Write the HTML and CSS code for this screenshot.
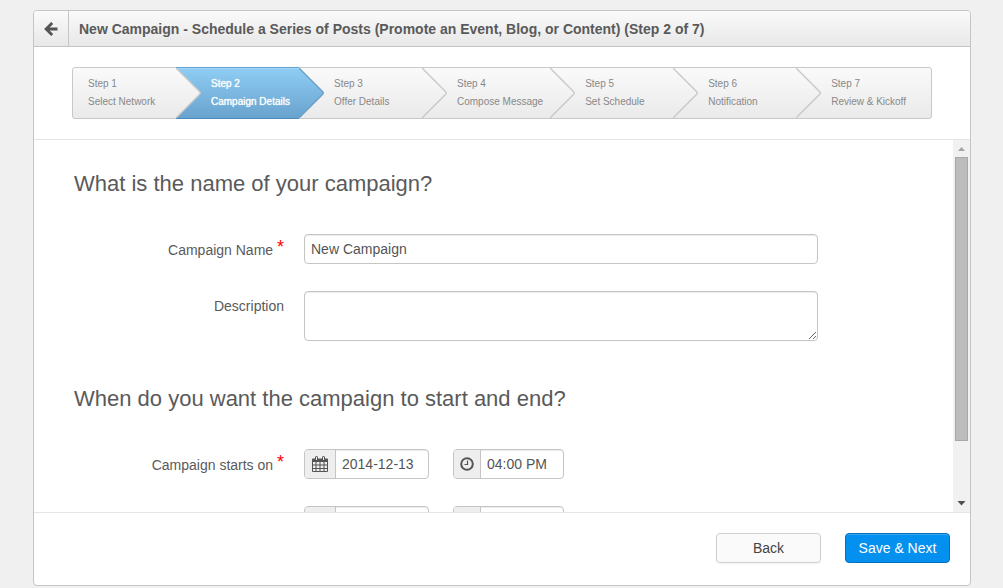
FILE: index.html
```html
<!DOCTYPE html>
<html lang="en">
<head>
  <meta charset="UTF-8" />
  <meta name="viewport" content="width=device-width, initial-scale=1.0" />
  <title>New Campaign</title>
  <link rel="stylesheet" href="styles.css">
</head>
<body>
  <form class="panel">
    <!-- Title bar -->
    <header class="panel-header">
      <button type="button" class="back-arrow" aria-label="Go back">
        <svg width="14" height="14" viewBox="0 0 14 14" fill="none" stroke="#555" stroke-width="2.8"><path d="M8.200 .9 2.100 7l6.100 6.100M2.500 7H13.500"/></svg>
      </button>
      <h1>New Campaign - Schedule a Series of Posts (Promote an Event, Blog, or Content) (Step 2 of 7)</h1>
    </header>

    <!-- Wizard steps -->
    <nav class="wizard">
      <svg class="defs" width="0" height="0">
        <defs>
          <linearGradient id="grey" x1="0" y1="0" x2="0" y2="1">
            <stop offset="0" stop-color="#fafafa"/><stop offset="1" stop-color="#eaeaea"/>
          </linearGradient>
          <linearGradient id="blue" x1="0" y1="0" x2="0" y2="1">
            <stop offset="0" stop-color="#8fcdf5"/><stop offset="1" stop-color="#68a3cd"/>
          </linearGradient>
        </defs>
      </svg>
      <ol class="steps">
        <li>Step 1<br>Select Network
          <svg class="arrow" viewBox="0 0 26 50"><path d="M0 0 23.500 23.500Q25 25 23.500 26.500L0 50"/></svg></li>
        <li class="active">Step 2<br>Campaign Details
          <svg class="arrow" viewBox="0 0 26 50"><path d="M0 0 23.500 23.500Q25 25 23.500 26.500L0 50"/></svg></li>
        <li>Step 3<br>Offer Details
          <svg class="arrow" viewBox="0 0 26 50"><path d="M0 0 23.500 23.500Q25 25 23.500 26.500L0 50"/></svg></li>
        <li>Step 4<br>Compose Message
          <svg class="arrow" viewBox="0 0 26 50"><path d="M0 0 23.500 23.500Q25 25 23.500 26.500L0 50"/></svg></li>
        <li>Step 5<br>Set Schedule
          <svg class="arrow" viewBox="0 0 26 50"><path d="M0 0 23.500 23.500Q25 25 23.500 26.500L0 50"/></svg></li>
        <li>Step 6<br>Notification
          <svg class="arrow" viewBox="0 0 26 50"><path d="M0 0 23.500 23.500Q25 25 23.500 26.500L0 50"/></svg></li>
        <li>Step 7<br>Review &amp; Kickoff</li>
      </ol>
    </nav>

    <!-- Form -->
    <div class="panel-body">
      <div class="content">
        <h2>What is the name of your campaign?</h2>
        <div class="row">
          <label for="name">Campaign Name <span class="required">*</span></label>
          <input type="text" id="name" class="field" value="New Campaign">
        </div>
        <div class="row">
          <label for="description">Description</label>
          <textarea id="description" class="field"></textarea>
        </div>

        <h2>When do you want the campaign to start and end?</h2>
        <div class="row">
          <label for="start-date">Campaign starts on <span class="required">*</span></label>
          <div class="when">
            <div class="group date">
              <span class="addon">
                <svg width="16" height="16" viewBox="0 0 16 16"><path fill="#555" fill-rule="evenodd" d="M1 2.500h2V1.500a1.500 1.500 0 0 1 3 0v1h4V1.500a1.500 1.500 0 0 1 3 0v1h2a1 1 0 0 1 1 1V15a1 1 0 0 1-1 1H1a1 1 0 0 1-1-1V3.500a1 1 0 0 1 1-1zM1 6v2.500h2.500V6zM4.500 6v2.500h3V6zM8.500 6v2.500h3V6zM12.500 6v2.500H15V6zM1 9.500V12h2.500V9.500zM4.500 9.500V12h3V9.500zM8.500 9.500V12h3V9.500zM12.500 9.500V12H15V9.500zM1 13v2h2.500v-2zM4.500 13v2h3v-2zM8.500 13v2h3v-2zM12.500 13v2H15v-2z"/><path stroke="#eee" d="M4.500 1v3M11.500 1v3"/></svg>
              </span>
              <input type="text" id="start-date" value="2014-12-13">
            </div>
            <div class="group time">
              <span class="addon">
                <svg width="14" height="14" viewBox="0 0 14 14" fill="none" stroke="#555"><circle cx="7" cy="7" r="5.800" stroke-width="2"/><path stroke-width="1.200" d="M7.500 3.500v4H4.500"/></svg>
              </span>
              <input type="text" aria-label="Start time" value="04:00 PM">
            </div>
          </div>
        </div>
        <div class="row">
          <span></span>
          <div class="when">
            <div class="group date"><span class="addon"></span><input type="text" aria-label="End date"></div>
            <div class="group time"><span class="addon"></span><input type="text" aria-label="End time"></div>
          </div>
        </div>
      </div>
      <div class="scrollbar">
        <svg width="17" height="17" viewBox="0 0 17 17"><path fill="#a3a3a3" d="M5 11 8.500 7 12 11z"/></svg>
        <div class="track"><div class="thumb"></div></div>
        <svg width="17" height="17" viewBox="0 0 17 17"><path fill="#505050" d="M4.500 6h8l-4 4.500z"/></svg>
      </div>
    </div>

    <footer class="panel-footer">
      <button type="button" class="btn">Back</button>
      <button type="button" class="btn primary">Save &amp; Next</button>
    </footer>
  </form>
</body>
</html>
```

FILE: styles.css
```css
* {
  box-sizing: border-box;
}
body {
  margin: 0;
  padding: 10px 32px 2px 33px;
  height: 100vh;
  background: #f0f0f0;
  color: #5a5a5a;
  font-family: "Liberation Sans", Arial, sans-serif;
  font-size: 14px;
  line-height: 20px;
}
input, textarea, button {
  font: inherit;
  color: #555;
}

.panel {
  display: flex;
  flex-direction: column;
  height: 100%;
  background: #fff;
  border: 1px solid #c5c5c5;
  border-radius: 4px;
  overflow: hidden;
}
.panel-header {
  display: flex;
  align-items: stretch;
  flex: none;
  height: 36px;
  background: linear-gradient(#fafafa, #e8e8e8);
  border-bottom: 1px solid #c5c5c5;
}
.back-arrow {
  display: flex;
  align-items: center;
  justify-content: center;
  width: 35px;
  padding: 0;
  background: none;
  border: 0;
  border-right: 1px solid #c5c5c5;
}
h1 {
  margin: 0;
  padding-left: 10px;
  font-size: 14px;
  line-height: 36px;
  white-space: nowrap;
}

/* wizard */
.wizard {
  flex: none;
  padding: 20px 38px;
  border-bottom: 1px solid #e5e5e5;
}
.defs {
  position: absolute;
}
.steps {
  display: flex;
  margin: 0;
  padding: 0;
  list-style: none;
  background: linear-gradient(#fafafa, #eaeaea);
  border: 1px solid #c8c8c8;
  border-radius: 3px;
  color: #888;
  font-size: 10px;
  line-height: 18px;
}
.steps li {
  position: relative;
  min-width: 123px;
  padding: 7px 7px 7px 35px;
  white-space: nowrap;
}
.steps li:first-child {
  min-width: 103px;
  padding-left: 15px;
}
.steps li:last-child {
  flex: 1;
}
.steps .active {
  margin: -1px 0;
  background: linear-gradient(#8fcdf5, #68a3cd);
  border-top: 1px solid #63a3cf;
  border-bottom: 1px solid #4c8bbb;
  box-shadow: inset 0 1px #a3d7f7;
  color: #fff;
  text-shadow: 0 0 1px #fff;
}
.arrow {
  position: absolute;
  z-index: 1;
  top: 0;
  left: 100%;
  width: 26px;
  height: 50px;
  fill: url(#grey);
  stroke: #c8c8c8;
  stroke-width: 1.4;
}
.active .arrow {
  fill: url(#blue);
  stroke: #6a9fc6;
}

/* form */
.panel-body {
  display: flex;
  flex: 1;
  min-height: 0;
}
.content {
  flex: 1;
  padding: 29px 40px 0;
  overflow: hidden;
}
h2 {
  margin: 0 0 35px;
  font-size: 22px;
  font-weight: normal;
  line-height: 30px;
}
.row + h2 {
  margin-top: 43px;
}
.row {
  display: grid;
  grid-template-columns: 210px minmax(0, 514px);
  gap: 20px;
}
.row + .row {
  margin-top: 26px;
}
.row label {
  line-height: 30px;
  text-align: right;
}
.required {
  color: #f00;
  font-size: 18px;
  line-height: 26px;
  vertical-align: 2px;
}
.field, .group {
  height: 30px;
  background: #fff;
  border: 1px solid #c5c5c5;
  border-radius: 4px;
  box-shadow: inset 0 1px 1px rgba(0, 0, 0, 0.08);
}
.field {
  width: 100%;
  padding: 4px 6px;
}
textarea.field {
  display: block;
  height: 50px;
  resize: both;
}
.when {
  display: flex;
  align-items: flex-start;
  gap: 24px;
}
.group {
  display: flex;
  overflow: hidden;
}
.date {
  width: 125px;
}
.time {
  width: 111px;
}
.addon {
  display: flex;
  align-items: center;
  justify-content: center;
  flex: none;
  width: 31px;
  background: #eee;
  border-right: 1px solid #c5c5c5;
}
.time .addon {
  width: 27px;
}
.group input {
  flex: 1;
  min-width: 0;
  padding: 0 6px;
  background: none;
  border: 0;
}

.scrollbar {
  display: flex;
  flex-direction: column;
  flex: none;
  width: 17px;
  background: #f1f1f1;
}
.scrollbar svg {
  flex: none;
}
.track {
  flex: 1;
  padding: 0 2px;
}
.thumb {
  height: 84%;
  background: #bcbcbc;
  border: 1px solid #a8a8a8;
}

.panel-footer {
  display: flex;
  justify-content: flex-end;
  gap: 24px;
  flex: none;
  padding: 20px 20px 22px;
  border-top: 1px solid #e5e5e5;
}
.btn {
  width: 105px;
  height: 30px;
  padding: 0;
  background: #fafafa;
  border: 1px solid #d0d0d0;
  border-radius: 4px;
  box-shadow: 0 1px 2px rgba(0, 0, 0, 0.05);
  color: #444;
}
.btn.primary {
  background: #0490ef;
  border-color: #0470bd;
  box-shadow: inset 0 1px #36a6f2;
  color: #fff;
}
```
